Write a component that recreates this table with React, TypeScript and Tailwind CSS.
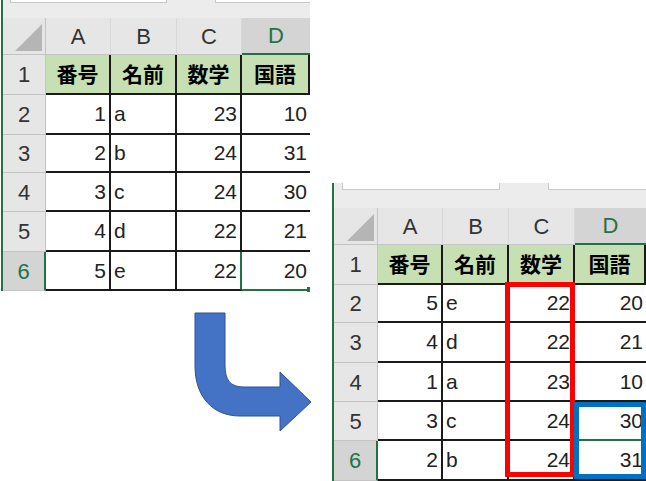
import React from "react"

type Row = [number, string, number, number]

interface SheetProps {
  data: Row[]
  className: string
  cols: string
  rowHeights: string[]
  band: React.ReactNode
  panel: 1 | 2
  children?: React.ReactNode
}

const HEADS = ["番号", "名前", "数学", "国語"]
const LETTERS = ["A", "B", "C", "D"]

function Sheet({ data, className, cols, rowHeights, band, panel, children }: SheetProps) {
  return (
    <div className={`relative flex flex-col border-l-2 border-[#217346] bg-[#ececec] ${className}`}>
      {band}

      <div className={`grid ${cols}`}>
        {/* column headers */}
        <div className="flex h-[37px] items-end justify-end border-r border-b border-[#c4c4c4] bg-[#e6e6e6] p-[3px]">
          <svg width="27" height="27" viewBox="0 0 27 27">
            <polygon points="27,0 27,27 0,27" fill="#b5b5b5" />
          </svg>
        </div>
        {LETTERS.map((l, i) => (
          <div
            key={l}
            className={`flex h-[37px] items-center justify-center text-[22px] ${
              i === 3
                ? "border-b-2 border-b-[#217346] bg-[#d4d4d4] text-[#217346]"
                : "border-r border-b border-r-[#d8d8d8] border-b-[#c4c4c4] bg-[#e6e6e6] text-[#333]"
            }`}
          >
            {l}
          </div>
        ))}

        {/* header row */}
        <div className={`flex ${rowHeights[0]} items-center justify-center border-r border-b border-[#c4c4c4] bg-[#e6e6e6] text-[22px] text-[#333]`}>
          1
        </div>
        {HEADS.map((h) => (
          <div
            key={h}
            className={`flex ${rowHeights[0]} items-center justify-center border-r-2 border-b-2 border-[#1a1a1a] bg-[#c6e0b4] font-['Noto_Sans_CJK_JP',sans-serif] text-[21px] font-bold text-black`}
          >
            {h}
          </div>
        ))}

        {/* data rows */}
        {data.map((r, ri) => {
          const last = ri === data.length - 1
          const h = rowHeights[ri + 1]
          return (
            <React.Fragment key={ri}>
              <div
                className={`flex ${h} items-center justify-center border-b text-[22px] ${
                  last
                    ? "border-r-2 border-r-[#217346] border-b-[#c4c4c4] bg-[#d4d4d4] text-[#217346]"
                    : "border-r border-[#c4c4c4] bg-[#e6e6e6] text-[#333]"
                }`}
              >
                {ri + 2}
              </div>
              <div className={`flex ${h} items-center justify-end border-r-2 border-b-2 border-[#1a1a1a] bg-white pr-[3px] text-[21px] text-[#222]`}>
                {r[0]}
              </div>
              <div className={`flex ${h} items-center justify-start border-r-2 border-b-2 border-[#1a1a1a] bg-white pl-[3px] text-[21px] text-[#222]`}>
                {r[1]}
              </div>
              <div
                className={`flex ${h} items-center justify-end border-r-2 border-b-2 bg-white pr-[3px] text-[21px] text-[#222] ${
                  panel === 1 && last ? "border-b-[#1a1a1a] border-r-[#217346]" : "border-[#1a1a1a]"
                }`}
              >
                {r[2]}
              </div>
              <div
                className={`relative flex ${h} items-center justify-end border-b-2 bg-white pr-[3px] text-[21px] text-[#222] ${
                  panel === 1 && last
                    ? "border-b-[#217346]"
                    : panel === 2 && ri === data.length - 2
                      ? "border-b-[#217346]"
                      : "border-[#1a1a1a]"
                }`}
              >
                {r[3]}
                {panel === 1 && last && <span className="absolute right-0 -bottom-[3px] h-[5px] w-[3px] bg-[#217346]" />}
              </div>
            </React.Fragment>
          )
        })}
      </div>

      {children}
    </div>
  )
}

export default function App() {
  const before: Row[] = [
    [1, "a", 23, 10],
    [2, "b", 24, 31],
    [3, "c", 24, 30],
    [4, "d", 22, 21],
    [5, "e", 22, 20],
  ]
  const after: Row[] = [
    [5, "e", 22, 20],
    [4, "d", 22, 21],
    [1, "a", 23, 10],
    [3, "c", 24, 30],
    [2, "b", 24, 31],
  ]

  return (
    <div className="flex h-[481px] w-[646px] gap-[22px] overflow-hidden bg-white pl-[1px] font-['Liberation_Sans','Noto_Sans_CJK_JP',sans-serif]">
      {/* left: before + arrow */}
      <div className="flex w-[309px] shrink-0 flex-col">
        <Sheet
          panel={1}
          data={before}
          className="w-[309px]"
          cols="grid-cols-[43px_65px_66px_65px_1fr]"
          rowHeights={["h-[40px]", "h-[40px]", "h-[38px]", "h-[39px]", "h-[40px]", "h-[39px]"]}
          band={
            <div className="flex h-[18px] shrink-0 items-start gap-[48px] pl-[7px]">
              <div className="h-[3px] w-[157px] border-x border-b border-[#c8c8c8] bg-white" />
              <div className="h-[3px] flex-1 border-l border-b border-[#c8c8c8] bg-white" />
            </div>
          }
        />

        <svg className="mt-[18px] ml-[189px]" width="125" height="126" viewBox="190 310 125 126">
          <path
            d="M195 314 L225 314 L225 366 C225 381 230 388 244 388 L280 388 L280 373 L311 403 L280 432 L280 417 L240 417 C212 417 195 397 195 367 Z"
            fill="#4472c4"
            stroke="#2f528f"
            strokeWidth="1"
          />
        </svg>
      </div>

      {/* right: after */}
      <div className="flex flex-1 flex-col pt-[183px]">
        <Sheet
          panel={2}
          data={after}
          className="w-[314px]"
          cols="grid-cols-[44px_65px_66px_66px_1fr]"
          rowHeights={["h-[40px]", "h-[38px]", "h-[40px]", "h-[39px]", "h-[39px]", "h-[40px]"]}
          band={
            <div className="flex h-[25px] shrink-0 items-start gap-[48px] pl-[8px]">
              <div className="h-[7px] w-[158px] border-x border-b border-[#c8c8c8] bg-white" />
              <div className="h-[7px] flex-1 border-l border-b border-[#c8c8c8] bg-white" />
            </div>
          }
        >
          {/* highlight boxes drawn over the sheet */}
          <div className="absolute left-[171px] top-[99px] h-[195px] w-[70px] border-[5px] border-[#ff0000]" />
          <div className="absolute left-[240px] top-[219px] h-[77px] w-[72px] border-[5px] border-[#0070c0]" />
        </Sheet>
      </div>
    </div>
  )
}
